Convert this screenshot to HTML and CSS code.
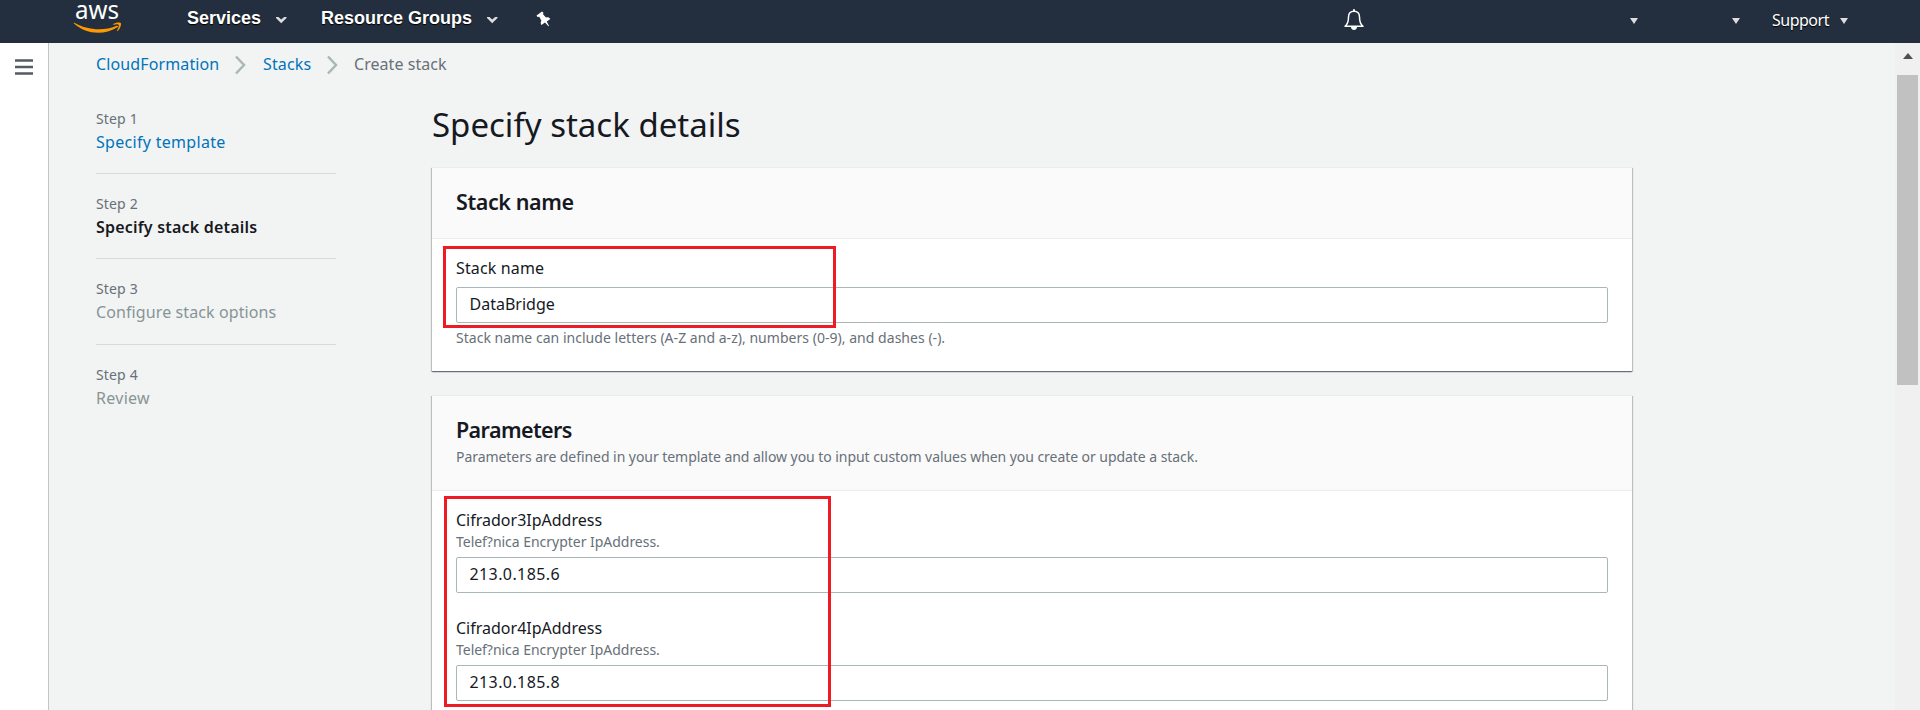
FILE: index.html
```html
<!DOCTYPE html>
<html lang="en">
<head>
<meta charset="utf-8">
<title>Create stack</title>
<link rel="stylesheet" href="styles.css">
</head>
<body>
<header class="topbar">
  <svg class="logo" width="50" height="36" viewBox="0 0 50 36" aria-label="aws">
    <text class="logo-text" x="2" y="19" textLength="44" lengthAdjust="spacingAndGlyphs">aws</text>
    <path d="M1 23.5 Q0 22.5 1.5 22.8 C13 30 31 31.5 43 26 C45.5 25 45.5 26.500 44 27.500 C31 35.500 13 34.500 1 23.500Z" fill="#f90"/>
    <path d="M40 24 C43 22 47.500 22 48 23.200 C48.400 25 47 29 44.700 31 C44 31.400 43.800 31 44.200 30.200 C45.500 27.500 46.500 25.500 45.500 24.700 C44.500 24 42 24.500 40.500 24.700 Z" fill="#f90"/>
  </svg>
  <nav class="menu">
    <a class="menu-item services">Services</a>
    <svg class="chev" width="11" height="8" viewBox="0 0 11 8"><path d="M0 1h2.500L5.200 3.500l3-2.500h2.300v1L5.200 7.200 0 2z" fill="#ddd"/></svg>
    <a class="menu-item groups">Resource Groups</a>
    <svg class="chev" width="11" height="8" viewBox="0 0 11 8"><path d="M0 1h2.500L5.200 3.500l3-2.500h2.300v1L5.200 7.200 0 2z" fill="#ddd"/></svg>
    <svg class="pin" width="16" height="17" viewBox="0 0 16 17"><path d="M0.500 4.500 L6 0.500 L7.500 1.800 L7 3.300 L10 6.500 C12 6 13.500 6.800 14.300 8 L10.800 10.500 L13 15 L12.400 15.300 L9 11.600 L5.500 14 C4.500 12.500 4.500 11 5.400 9.700 L3.300 5.800 L1.500 5.900Z" fill="#fff"/></svg>
  </nav>
  <div class="account">
    <svg class="bell" width="20" height="22" viewBox="0 0 20 22"><path d="M1 17.300 C3.500 15.500 4.500 13.500 4.500 8 C4.500 4.500 6.500 2.200 10 2.200 S15.500 4.500 15.500 8 C15.500 13.500 16.500 15.500 19 17.300Z" fill="none" stroke="#fff" stroke-width="1.500" stroke-linejoin="round"/><path d="M7 18h6c0 4-6 4-6 0zM9 .3h2v2H9z" fill="#fff"/></svg>
    <i class="caret"></i>
    <i class="caret second"></i>
    <span class="support">Support</span>
    <i class="caret last"></i>
  </div>
</header>
<div class="body">
  <aside class="rail"><svg width="18" height="16" viewBox="0 0 18 16"><path d="M0 1.500h18M0 8h18M0 14.500h18" stroke="#545b64" stroke-width="2.400"/></svg></aside>
  <main class="page">
    <nav class="crumbs">
      <a class="link c1">CloudFormation</a>
      <svg width="11" height="20" viewBox="0 0 11 20"><path d="M1 1.500L9 10L1 18.500" fill="none" stroke="#aab7b8" stroke-width="2.500"/></svg>
      <a class="link c2">Stacks</a>
      <svg width="11" height="20" viewBox="0 0 11 20"><path d="M1 1.500L9 10L1 18.500" fill="none" stroke="#aab7b8" stroke-width="2.500"/></svg>
      <span class="c3">Create stack</span>
    </nav>
    <div class="columns">
      <ol class="steps">
        <li class="step"><small>Step 1</small><a class="link s1">Specify template</a></li>
        <li class="step"><small>Step 2</small><b class="s2">Specify stack details</b></li>
        <li class="step tall"><small>Step 3</small><span class="s3">Configure stack options</span></li>
        <li class="step"><small>Step 4</small><span class="s4">Review</span></li>
      </ol>
      <section class="content">
        <h1>Specify stack details</h1>
        <div class="panel">
          <div class="panel-head"><h2 class="h-stack">Stack name</h2></div>
          <div class="panel-body">
            <label class="label l-stack">Stack name</label>
            <div class="input first"><span class="v-name">DataBridge</span></div>
            <p class="hint h-name">Stack name can include letters (A-Z and a-z), numbers (0-9), and dashes (-).</p>
            <div class="mark mark-name"></div>
          </div>
        </div>
        <div class="panel params">
          <div class="panel-head"><h2 class="h-params">Parameters</h2><p class="desc">Parameters are defined in your template and allow you to input custom values when you create or update a stack.</p></div>
          <div class="panel-body">
            <div class="field">
              <label class="label l-cif">Cifrador3IpAddress</label>
              <p class="hint h-tel">Telef?nica Encrypter IpAddress.</p>
              <div class="input"><span class="v-ip">213.0.185.6</span></div>
            </div>
            <div class="field">
              <label class="label l-cif">Cifrador4IpAddress</label>
              <p class="hint h-tel">Telef?nica Encrypter IpAddress.</p>
              <div class="input"><span class="v-ip">213.0.185.8</span></div>
            </div>
            <div class="mark mark-ip"></div>
          </div>
        </div>
      </section>
    </div>
  </main>
  <div class="scrollbar"><i class="arrow"></i><i class="thumb"></i></div>
</div>
</body>
</html>
```
FILE: styles.css
```css
* { box-sizing: border-box; }
html, body { height: 710px; overflow: hidden; }
body { margin: 0; display: flex; flex-direction: column; background: #f2f3f3; color: #16191f; font: 16px/22px "Noto Sans", sans-serif; }
h1, h2, p, ol { margin: 0; padding: 0; font-weight: 400; }
svg { display: block; flex: none; }
.topbar { height: 43px; flex: none; background: #232f3e; display: flex; color: #fff; }
.logo { margin-left: 73px; overflow: visible; }
.logo-text { font: 26px "Noto Sans", sans-serif; fill: #fff; }
.menu { display: flex; margin-left: 64px; }
.menu-item { font: bold 18px/36px "Liberation Sans", sans-serif; text-shadow: 0 1px 1px #000; white-space: nowrap; }
.services { width: 89px; }
.groups { width: 166px; margin-left: 34px; }
.chev { margin-top: 16px; }
.pin { margin: 11px 0 0 38px; }
.account { display: flex; margin-left: auto; width: 576px; }
.bell { margin-top: 9px; margin-right: 266px; }
.caret { flex: none; border: 4px solid transparent; border-top: 6px solid #ddd; border-bottom: 0; height: 6px; margin-top: 18px; }
.second { margin-left: 94px; }
.support { width: 58px; margin: 9px 0 0 32px; white-space: nowrap; letter-spacing: -.5px; text-shadow: 0 1px 1px #000; }
.last { margin-left: 10px; }
.body { flex: 1; display: flex; min-height: 0; }
.rail { width: 49px; background: #fff; border-right: 1px solid #bfc7c9; padding: 16px 0 0 15px; flex: none; }
.page { flex: 1; padding: 10px 0 0 47px; min-width: 0; }
.crumbs { display: flex; height: 22px; align-items: center; color: #687078; white-space: nowrap; }
.link { color: #0073bb; }
.crumbs svg { margin: 2px 0 0; }
.c1 { width: 139px; letter-spacing: .12px; }
.c2 { width: 64px; margin-left: 17px; letter-spacing: .15px; }
.c3 { margin-left: 16px; letter-spacing: .05px; }
.columns { display: flex; }
.steps { width: 240px; list-style: none; padding-top: 34px; flex: none; }
.step { height: 85px; border-bottom: 1px solid #d5dbdb; display: flex; flex-direction: column; white-space: nowrap; }
.step:first-child { height: 65px; }
.step + .step { padding-top: 20px; }
.tall { height: 86px; }
.step:last-child { border: 0; }
.step small { font-size: 14px; line-height: 20px; color: #687078; height: 22px; letter-spacing: .15px; }
.step b { font-weight: 600; letter-spacing: .2px; }
.s1 { letter-spacing: .3px; }
.s3, .s4 { color: #879596; letter-spacing: .1px; }
.s4 { letter-spacing: .3px; }
.content { width: 1200px; margin-left: 96px; padding-top: 28px; }
h1 { font-size: 33px; line-height: 44px; height: 64px; }
.panel { background: #fff; box-shadow: 0 1px 1px 0 rgba(0,28,36,.4), 1px 1px 1px 0 rgba(0,28,36,.18), -1px 1px 1px 0 rgba(0,28,36,.18); height: 204px; border-top: 1px solid #eaeded; }
.panel-head { height: 71px; background: #fafafa; border-bottom: 1px solid #eaeded; padding: 19px 24px 0; }
h2 { font-size: 21.5px; line-height: 30px; font-weight: 600; letter-spacing: -.4px; }
.h-params { letter-spacing: -.6px; }
.panel-body { padding: 18px 24px 0; position: relative; }
.label { display: block; }
.l-stack { letter-spacing: .15px; }
.input { height: 36px; border: 1px solid #aab7b8; border-radius: 2px; padding: 5px 12.5px; }
.v-ip { letter-spacing: .4px; }
.first { margin-top: 8px; }
.hint, .desc { font-size: 14px; line-height: 20px; color: #687078; white-space: nowrap; }
.h-name { margin-top: 5px; letter-spacing: .03px; }
.desc { margin-top: 2px; letter-spacing: -.055px; }
.params { margin-top: 24px; height: 330px; }
.params .panel-head { height: 95px; }
.field { height: 108px; }
.params .hint { height: 26px; padding-top: 1px; letter-spacing: -.03px; }
.mark { position: absolute; border: 3px solid #ed1c24; }
.mark-name { left: 11px; top: 7px; width: 393px; height: 82px; }
.mark-ip { left: 12px; top: 5px; width: 387px; height: 211px; }
.scrollbar { width: 25px; background: #f0f0f0; display: flex; flex-direction: column; align-items: center; flex: none; }
.arrow { border: 5.5px solid transparent; border-bottom: 6px solid #505050; border-top: 0; margin-top: 10px; }
.thumb { width: 21px; height: 310px; background: #c1c1c1; margin-top: 16px; }
```
